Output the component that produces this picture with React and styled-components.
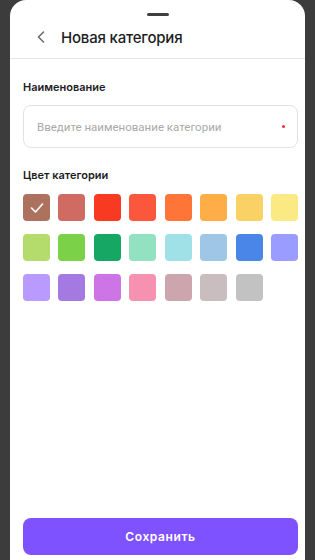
import React, { useState } from 'react';
import styled, { createGlobalStyle } from 'styled-components';

const GlobalStyle = createGlobalStyle`
  html, body {
    margin: 0;
    padding: 0;
    background: #3c3c3c;
  }
  * { box-sizing: border-box; }
`;

const Sheet = styled.div`
  margin: 0 10px;
  height: 560px;
  background: #fff;
  border-radius: 16px 16px 0 0;
  display: flex;
  flex-direction: column;
  font-family: Inter, "Noto Sans", sans-serif;
  color: #1d1d1f;
`;

const Handle = styled.div`
  width: 22px;
  height: 3px;
  border-radius: 2px;
  background: #3f3f3f;
  margin: 13px auto 0;
`;

const Header = styled.div`
  display: flex;
  align-items: center;
  height: 43px;
  padding: 0 0 0 27px;
  border-bottom: 1px solid #e6e6e6;
`;

const BackButton = styled.button`
  background: none;
  border: none;
  padding: 0;
  width: 10px;
  height: 14px;
  display: flex;
  align-items: center;
  color: #6d6d6d;
  cursor: pointer;
`;

const Title = styled.h1`
  margin: 0 0 0 14px;
  font-size: 15px;
  font-weight: 500;
  letter-spacing: -0.2px;
`;

const Body = styled.div`
  flex: 1;
  display: flex;
  flex-direction: column;
  padding: 21px 7px 5px 13px;
`;

const Label = styled.div`
  font-size: 11px;
  font-weight: 600;
  margin-bottom: ${p => p.$gap}px;
`;

const InputBox = styled.div`
  height: 43px;
  border: 1px solid #e2e2e2;
  border-radius: 8px;
  display: flex;
  align-items: center;
  padding: 0 12px 0 13px;
  margin-bottom: 20px;
`;

const Input = styled.input`
  flex: 1;
  border: none;
  outline: none;
  padding: 0;
  font-family: Roboto, "Noto Sans", sans-serif;
  font-size: 11.5px;
  color: #333;
  &::placeholder { color: #a9a9a9; }
`;

const RequiredDot = styled.span`
  width: 3px;
  height: 3px;
  border-radius: 50%;
  background: #e8312f;
`;

const Palette = styled.div`
  display: grid;
  grid-template-columns: repeat(8, 27px);
  justify-content: space-between;
  row-gap: 13px;
`;

const Swatch = styled.button`
  width: 27px;
  height: 27px;
  border: none;
  padding: 0;
  border-radius: 4px;
  background: ${p => p.$color};
  display: flex;
  align-items: center;
  justify-content: center;
  cursor: pointer;
`;

const Spacer = styled.div`
  flex: 1;
`;

const SaveButton = styled.button`
  height: 37px;
  border: none;
  border-radius: 8px;
  background: #7f52ff;
  color: #fff;
  font-family: Inter, "Noto Sans", sans-serif;
  font-size: 12px;
  font-weight: 600;
  letter-spacing: 0.6px;
  cursor: pointer;
`;

const colors = [
  '#ac725e', '#d06b64', '#f83a22', '#fa573c', '#ff7537', '#ffad46', '#fad165', '#fbe983',
  '#b3dc6c', '#7bd148', '#16a765', '#92e1c0', '#9fe1e7', '#9fc6e7', '#4986e7', '#9a9cff',
  '#b99aff', '#a47ae2', '#cd74e6', '#f691b2', '#cca6ac', '#cabdbf', '#c2c2c2',
];

export default function App() {
  const [selected, setSelected] = useState(0);
  return (
    <>
      <GlobalStyle />
      <Sheet>
        <Handle />
        <Header>
          <BackButton aria-label="Назад">
            <svg width="8" height="12" viewBox="0 0 8 12" fill="none">
              <path d="M6.5 1L1.5 6l5 5" stroke="currentColor" strokeWidth="1.6" strokeLinecap="round" strokeLinejoin="round" />
            </svg>
          </BackButton>
          <Title>Новая категория</Title>
        </Header>
        <Body>
          <Label $gap={11}>Наименование</Label>
          <InputBox>
            <Input placeholder="Введите наименование категории" />
            <RequiredDot />
          </InputBox>
          <Label $gap={12}>Цвет категории</Label>
          <Palette>
            {colors.map((c, i) => (
              <Swatch key={c} $color={c} onClick={() => setSelected(i)}>
                {selected === i && (
                  <svg width="14" height="10" viewBox="0 0 14 10" fill="none">
                    <path d="M1.5 5l4 4 7-8" stroke="#fff" strokeWidth="1.6" strokeLinecap="round" strokeLinejoin="round" />
                  </svg>
                )}
              </Swatch>
            ))}
          </Palette>
          <Spacer />
          <SaveButton>Сохранить</SaveButton>
        </Body>
      </Sheet>
    </>
  );
}
